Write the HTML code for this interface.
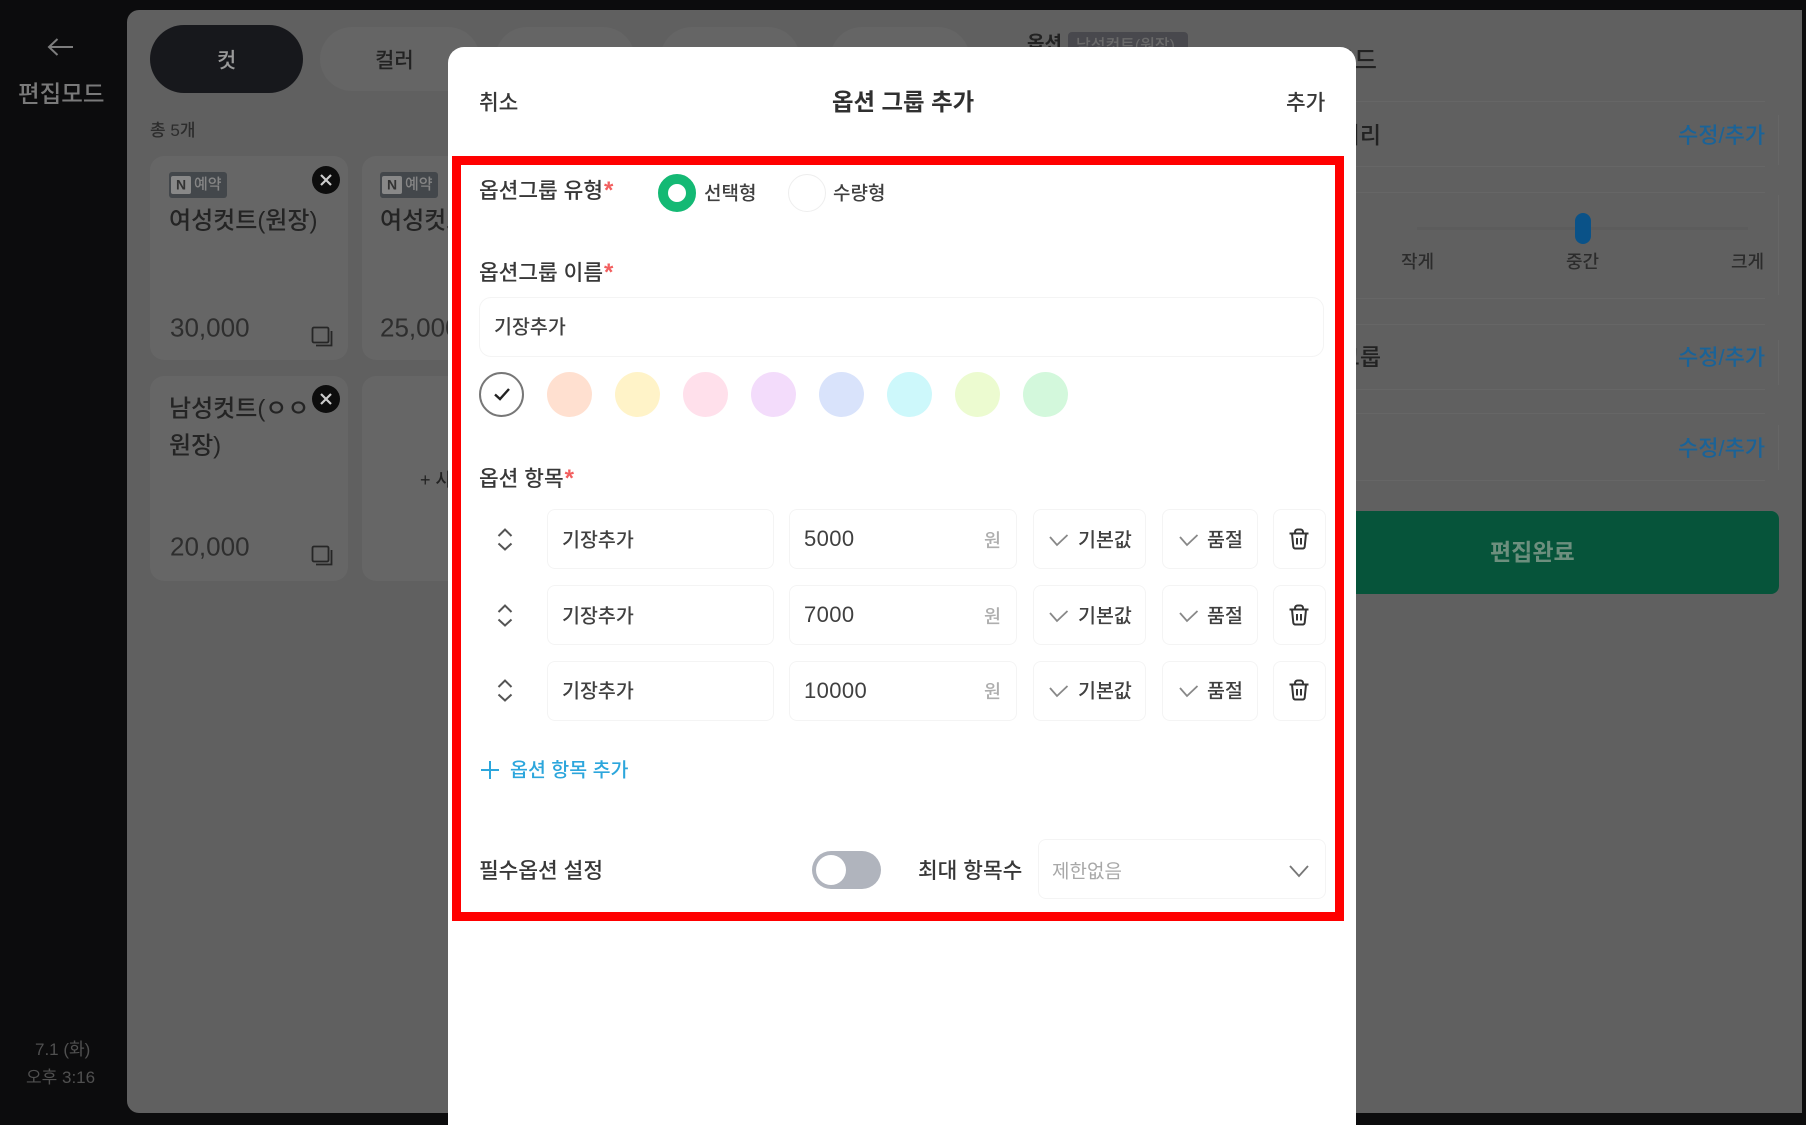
<!DOCTYPE html>
<html lang="ko">
<head>
<meta charset="utf-8">
<title>옵션 그룹 추가</title>
<style>
html,body{margin:0;padding:0;width:1806px;height:1125px;overflow:hidden;background:#0c0c0d}
body{position:relative;font-family:"Liberation Sans","Noto Sans CJK KR",sans-serif}
div,span.t,svg{position:absolute}
.t{white-space:nowrap;line-height:1.2;transform:translateY(-50%);font-weight:500}
.b{background:#fff;border:1px solid #f4f4f4;border-radius:8px;box-sizing:border-box}
.cd{background:#666;border-radius:14px}
.x{width:28px;height:28px;border-radius:50%;background:#0d0d0d}
.lb{color:#383838;font-size:21.4px}
.row{color:#404040;font-size:19.5px}
.num{color:#404040;font-size:22px;letter-spacing:.4px;font-weight:400}
.won{color:#aeaeae;font-size:18.5px}
.rs{color:#1a6398;font-size:22px}
.ln{background:#666;height:1px;left:1003px;width:762px}
.c{width:45px;height:45px;border-radius:50%;top:372px}
i.s{color:#f25f5f;font-style:normal;font-size:24px;line-height:0;margin-left:1px;font-weight:700}
</style>
</head>
<body>
<!-- sidebar -->
<svg style="left:46px;top:36px" width="30" height="22" viewBox="0 0 30 22" fill="none" stroke="#7d7d7d" stroke-width="2"><path d="M27 11H3M11.500 3 3 11l8.500 8"/></svg>
<span class="t" style="position:absolute;left:18px;top:94px;font-size:23.500px;color:#7a7a7a">편집모드</span>
<span class="t" style="position:absolute;left:35px;top:1050px;font-size:17px;color:#505050;font-weight:400">7.1 (화)</span>
<span class="t" style="position:absolute;left:26px;top:1078px;font-size:17px;color:#505050;font-weight:400">오후 3:16</span>

<!-- dimmed panel -->
<div style="left:127px;top:9.500px;width:1675px;height:1103.500px;background:#606060;border-radius:12px 0 0 12px"></div>
<div style="left:150px;top:25px;width:153px;height:68px;border-radius:34px;background:#17181c"></div>
<span class="t" style="position:absolute;left:217px;top:61px;font-size:21px;color:#9a9a9a">컷</span>
<div style="left:320px;top:27px;width:160px;height:64px;border-radius:32px;background:#656565"></div>
<div style="left:495px;top:27px;width:140px;height:64px;border-radius:32px;background:#656565"></div>
<div style="left:660px;top:27px;width:140px;height:64px;border-radius:32px;background:#656565"></div>
<div style="left:830px;top:27px;width:140px;height:64px;border-radius:32px;background:#656565"></div>
<span class="t" style="position:absolute;left:375px;top:61px;font-size:21px;color:#222">컬러</span>
<span class="t" style="position:absolute;left:150px;top:131px;font-size:17px;color:#2c2c2c">총 5개</span>

<div class="cd" style="left:150px;top:156px;width:198px;height:204px"></div>
<div class="cd" style="left:362px;top:156px;width:198px;height:204px"></div>
<div class="cd" style="left:150px;top:376px;width:198px;height:205px"></div>
<div class="cd" style="left:362px;top:376px;width:198px;height:205px"></div>

<div style="left:169px;top:172px;width:58px;height:26px;background:#43474b;border-radius:3px"></div>
<div style="left:171px;top:176px;width:20px;height:18px;background:#888;border-radius:2px"></div>
<span class="t" style="position:absolute;left:176px;top:185px;font-size:14px;font-weight:700;color:#333">N</span>
<span class="t" style="position:absolute;left:194px;top:185px;font-size:15px;color:#858585">예약</span>
<div style="left:380px;top:172px;width:58px;height:26px;background:#43474b;border-radius:3px"></div>
<div style="left:382px;top:176px;width:20px;height:18px;background:#888;border-radius:2px"></div>
<span class="t" style="position:absolute;left:387px;top:185px;font-size:14px;font-weight:700;color:#333">N</span>
<span class="t" style="position:absolute;left:405px;top:185px;font-size:15px;color:#858585">예약</span>

<span class="t" style="position:absolute;left:169px;top:222px;font-size:24px;color:#242424">여성컷트(원장)</span>
<span class="t" style="position:absolute;left:380px;top:222px;font-size:24px;color:#242424">여성컷트</span>
<span class="t" style="position:absolute;left:169px;top:410px;font-size:24px;color:#242424">남성컷트(ㅇㅇ</span>
<span class="t" style="position:absolute;left:169px;top:447px;font-size:24px;color:#242424">원장)</span>
<span class="t" style="position:absolute;left:170px;top:328px;font-size:26px;color:#2e2e2e;font-weight:400">30,000</span>
<span class="t" style="position:absolute;left:380px;top:328px;font-size:26px;color:#2e2e2e;font-weight:400">25,000</span>
<span class="t" style="position:absolute;left:170px;top:547px;font-size:26px;color:#2e2e2e;font-weight:400">20,000</span>
<span class="t" style="position:absolute;left:420px;top:481px;font-size:18px;color:#222">+ 사이즈</span>

<div class="x" style="left:312px;top:166px"></div>
<svg style="left:312px;top:166px" width="28" height="28" viewBox="0 0 28 28" stroke="#ccc" stroke-width="2.200"><path d="M9 9l10 10M19 9 9 19"/></svg>
<div class="x" style="left:312px;top:385px"></div>
<svg style="left:312px;top:385px" width="28" height="28" viewBox="0 0 28 28" stroke="#ccc" stroke-width="2.200"><path d="M9 9l10 10M19 9 9 19"/></svg>

<svg style="left:311px;top:326px" width="22" height="21" viewBox="0 0 22 21" fill="none" stroke="#262626" stroke-width="1.800"><rect x="1.500" y="1.500" width="16" height="15" rx="1.500"/><path d="M20.500 5v14.500H5"/></svg>
<svg style="left:311px;top:545px" width="22" height="21" viewBox="0 0 22 21" fill="none" stroke="#262626" stroke-width="1.800"><rect x="1.500" y="1.500" width="16" height="15" rx="1.500"/><path d="M20.500 5v14.500H5"/></svg>

<!-- right column behind modal -->
<span class="t" style="position:absolute;left:1027px;top:45px;font-size:19px;color:#222;font-weight:700">옵션</span>
<div style="left:1068px;top:32px;width:120px;height:30px;background:#48484d;border-radius:4px"></div>
<span class="t" style="position:absolute;left:1076px;top:46px;font-size:16px;color:#6a6a6a">남성컷트(원장)</span>
<span class="t" style="position:absolute;right:429px;top:61px;font-size:25px;color:#222">모드</span>
<div class="ln" style="top:101px"></div><div class="ln" style="top:166px"></div>
<div class="ln" style="top:192px"></div><div class="ln" style="top:298px"></div>
<div class="ln" style="top:324px"></div><div class="ln" style="top:389px"></div>
<div class="ln" style="top:413px"></div><div class="ln" style="top:480px"></div>
<div style="left:1778px;top:115px;width:1px;height:50px;background:#666"></div>
<div style="left:1778px;top:195px;width:1px;height:100px;background:#666"></div>
<div style="left:1778px;top:340px;width:1px;height:45px;background:#666"></div>
<div style="left:1778px;top:425px;width:1px;height:45px;background:#666"></div>

<span class="t" style="position:absolute;right:425px;top:136px;font-size:23px;color:#222">머리</span>
<span class="t" style="position:absolute;right:425px;top:358px;font-size:23px;color:#222">그룹</span>
<span class="t rs" style="position:absolute;left:1678px;top:136px">수정/추가</span>
<span class="t rs" style="position:absolute;left:1678px;top:358px">수정/추가</span>
<span class="t rs" style="position:absolute;left:1678px;top:449px">수정/추가</span>

<div style="left:1417px;top:227px;width:331px;height:3px;background:#5c5c5c"></div>
<div style="left:1575px;top:213px;width:16px;height:31px;border-radius:8px;background:#0a5288"></div>
<span class="t" style="position:absolute;left:1401px;top:263px;font-size:18px;color:#2c2c2c">작게</span>
<span class="t" style="position:absolute;left:1566px;top:263px;font-size:18px;color:#2c2c2c">중간</span>
<span class="t" style="position:absolute;left:1731px;top:263px;font-size:18px;color:#2c2c2c">크게</span>

<div style="left:1290px;top:511px;width:489px;height:83px;background:#06543a;border-radius:8px"></div>
<span class="t" style="position:absolute;left:1490px;top:553px;font-size:23px;color:#6d8f7e;font-weight:700">편집완료</span>

<!-- modal -->
<div style="left:448px;top:47px;width:908px;height:1078px;background:#fff;border-radius:16px 16px 0 0"></div>
<div style="left:452px;top:156px;width:892px;height:765px;border:9px solid #f00;box-sizing:border-box"></div>

<span class="t lb" style="position:absolute;left:479px;top:104px">취소</span>
<span class="t" style="position:absolute;left:832px;top:102px;font-size:23.400px;font-weight:700;color:#303030">옵션 그룹 추가</span>
<span class="t lb" style="position:absolute;left:1286px;top:104px">추가</span>

<span class="t lb" style="position:absolute;left:479px;top:192px">옵션그룹 유형<i class="s">*</i></span>
<div style="left:658px;top:174px;width:38px;height:38px;border-radius:50%;border:10px solid #14b974;box-sizing:border-box;background:#fff"></div>
<span class="t" style="position:absolute;left:704px;top:195px;font-size:19px;color:#404040">선택형</span>
<div style="left:788px;top:174px;width:38px;height:38px;border-radius:50%;border:1px solid #eee;box-sizing:border-box"></div>
<span class="t" style="position:absolute;left:833px;top:195px;font-size:19px;color:#404040">수량형</span>

<span class="t lb" style="position:absolute;left:479px;top:274px">옵션그룹 이름<i class="s">*</i></span>
<div class="b" style="left:479px;top:297px;width:845px;height:60px;border-radius:12px"></div>
<span class="t row" style="position:absolute;left:494px;top:328px">기장추가</span>

<div class="c" style="left:479px;border:2px solid #777;box-sizing:border-box"></div>
<svg style="left:491px;top:384px" width="22" height="20" viewBox="0 0 22 20" fill="none" stroke="#222" stroke-width="2.400"><path d="M4 10.500l5 4.500 9-10"/></svg>
<div class="c" style="left:547px;background:#ffe0d0"></div>
<div class="c" style="left:615px;background:#fff3c8"></div>
<div class="c" style="left:683px;background:#ffe0eb"></div>
<div class="c" style="left:751px;background:#f3dcfb"></div>
<div class="c" style="left:819px;background:#d9e3fb"></div>
<div class="c" style="left:887px;background:#cdf8fb"></div>
<div class="c" style="left:955px;background:#ecfbd0"></div>
<div class="c" style="left:1023px;background:#d3f8dc"></div>

<span class="t lb" style="position:absolute;left:479px;top:480px">옵션 항목<i class="s">*</i></span>

<!-- row 1 -->
<svg style="left:495px;top:526px" width="20" height="28" viewBox="0 0 20 28" fill="none" stroke="#555" stroke-width="2"><path d="M3.500 10 10 3.500l6.500 6.500M3.500 17.500 10 23.500l6.500-6"/></svg>
<div class="b" style="left:547px;top:509px;width:227px;height:60px"></div>
<span class="t row" style="position:absolute;left:562px;top:541px">기장추가</span>
<div class="b" style="left:789px;top:509px;width:228px;height:60px"></div>
<span class="t num" style="position:absolute;left:804px;top:539px">5000</span>
<span class="t won" style="position:absolute;left:984px;top:541px">원</span>
<div class="b" style="left:1033px;top:509px;width:113px;height:60px"></div>
<svg style="left:1047px;top:531px" width="22" height="17" viewBox="0 0 22 17" fill="none" stroke="#888" stroke-width="1.800"><path d="M3 6l7 8L20.500 4"/></svg>
<span class="t row" style="position:absolute;left:1078px;top:541px">기본값</span>
<div class="b" style="left:1162px;top:509px;width:96px;height:60px"></div>
<svg style="left:1177px;top:531px" width="22" height="17" viewBox="0 0 22 17" fill="none" stroke="#888" stroke-width="1.800"><path d="M3 6l7 8L20.500 4"/></svg>
<span class="t row" style="position:absolute;left:1207px;top:541px">품절</span>
<div class="b" style="left:1273px;top:509px;width:53px;height:60px"></div>
<svg style="left:1288px;top:528px" width="22" height="22" viewBox="0 0 22 22" fill="none" stroke="#333" stroke-width="2"><path d="M1.500 5.500h19M7 5.500V4a2.500 2.500 0 0 1 2.500-2.500h3A2.500 2.500 0 0 1 15 4v1.500M4 5.500l1.300 13.200a2 2 0 0 0 2 1.800h7.400a2 2 0 0 0 2-1.800L18 5.500M9 10v6.500M13 10v6.500"/></svg>

<!-- row 2 -->
<svg style="left:495px;top:602px" width="20" height="28" viewBox="0 0 20 28" fill="none" stroke="#555" stroke-width="2"><path d="M3.500 10 10 3.500l6.500 6.500M3.500 17.500 10 23.500l6.500-6"/></svg>
<div class="b" style="left:547px;top:585px;width:227px;height:60px"></div>
<span class="t row" style="position:absolute;left:562px;top:617px">기장추가</span>
<div class="b" style="left:789px;top:585px;width:228px;height:60px"></div>
<span class="t num" style="position:absolute;left:804px;top:615px">7000</span>
<span class="t won" style="position:absolute;left:984px;top:617px">원</span>
<div class="b" style="left:1033px;top:585px;width:113px;height:60px"></div>
<svg style="left:1047px;top:607px" width="22" height="17" viewBox="0 0 22 17" fill="none" stroke="#888" stroke-width="1.800"><path d="M3 6l7 8L20.500 4"/></svg>
<span class="t row" style="position:absolute;left:1078px;top:617px">기본값</span>
<div class="b" style="left:1162px;top:585px;width:96px;height:60px"></div>
<svg style="left:1177px;top:607px" width="22" height="17" viewBox="0 0 22 17" fill="none" stroke="#888" stroke-width="1.800"><path d="M3 6l7 8L20.500 4"/></svg>
<span class="t row" style="position:absolute;left:1207px;top:617px">품절</span>
<div class="b" style="left:1273px;top:585px;width:53px;height:60px"></div>
<svg style="left:1288px;top:604px" width="22" height="22" viewBox="0 0 22 22" fill="none" stroke="#333" stroke-width="2"><path d="M1.500 5.500h19M7 5.500V4a2.500 2.500 0 0 1 2.500-2.500h3A2.500 2.500 0 0 1 15 4v1.500M4 5.500l1.300 13.200a2 2 0 0 0 2 1.800h7.400a2 2 0 0 0 2-1.800L18 5.500M9 10v6.500M13 10v6.500"/></svg>

<!-- row 3 -->
<svg style="left:495px;top:677px" width="20" height="28" viewBox="0 0 20 28" fill="none" stroke="#555" stroke-width="2"><path d="M3.500 10 10 3.500l6.500 6.500M3.500 17.500 10 23.500l6.500-6"/></svg>
<div class="b" style="left:547px;top:661px;width:227px;height:60px"></div>
<span class="t row" style="position:absolute;left:562px;top:692px">기장추가</span>
<div class="b" style="left:789px;top:661px;width:228px;height:60px"></div>
<span class="t num" style="position:absolute;left:804px;top:691px">10000</span>
<span class="t won" style="position:absolute;left:984px;top:692px">원</span>
<div class="b" style="left:1033px;top:661px;width:113px;height:60px"></div>
<svg style="left:1047px;top:682px" width="22" height="17" viewBox="0 0 22 17" fill="none" stroke="#888" stroke-width="1.800"><path d="M3 6l7 8L20.500 4"/></svg>
<span class="t row" style="position:absolute;left:1078px;top:692px">기본값</span>
<div class="b" style="left:1162px;top:661px;width:96px;height:60px"></div>
<svg style="left:1177px;top:682px" width="22" height="17" viewBox="0 0 22 17" fill="none" stroke="#888" stroke-width="1.800"><path d="M3 6l7 8L20.500 4"/></svg>
<span class="t row" style="position:absolute;left:1207px;top:692px">품절</span>
<div class="b" style="left:1273px;top:661px;width:53px;height:60px"></div>
<svg style="left:1288px;top:679px" width="22" height="22" viewBox="0 0 22 22" fill="none" stroke="#333" stroke-width="2"><path d="M1.500 5.500h19M7 5.500V4a2.500 2.500 0 0 1 2.500-2.500h3A2.500 2.500 0 0 1 15 4v1.500M4 5.500l1.300 13.200a2 2 0 0 0 2 1.800h7.400a2 2 0 0 0 2-1.800L18 5.500M9 10v6.500M13 10v6.500"/></svg>

<!-- add item -->
<svg style="left:479px;top:759px" width="22" height="22" viewBox="0 0 22 22" stroke="#2ca6dc" stroke-width="2"><path d="M11 2v18M2 11h18"/></svg>
<span class="t" style="position:absolute;left:510px;top:771px;font-size:19.500px;color:#2ca6dc">옵션 항목 추가</span>

<!-- bottom -->
<span class="t lb" style="position:absolute;left:479px;top:872px">필수옵션 설정</span>
<div style="left:812px;top:851px;width:69px;height:38px;border-radius:19px;background:#b0b4bd"></div>
<div style="left:816px;top:855px;width:30px;height:30px;border-radius:50%;background:#fff"></div>
<span class="t lb" style="position:absolute;left:918px;top:872px">최대 항목수</span>
<div class="b" style="left:1038px;top:839px;width:288px;height:60px"></div>
<span class="t" style="position:absolute;left:1052px;top:873px;font-size:19px;color:#a8a8a8;font-weight:400">제한없음</span>
<svg style="left:1288px;top:862px" width="22" height="18" viewBox="0 0 22 18" fill="none" stroke="#777" stroke-width="1.800"><path d="M2 4l9 10 9-10"/></svg>
</body>
</html>
